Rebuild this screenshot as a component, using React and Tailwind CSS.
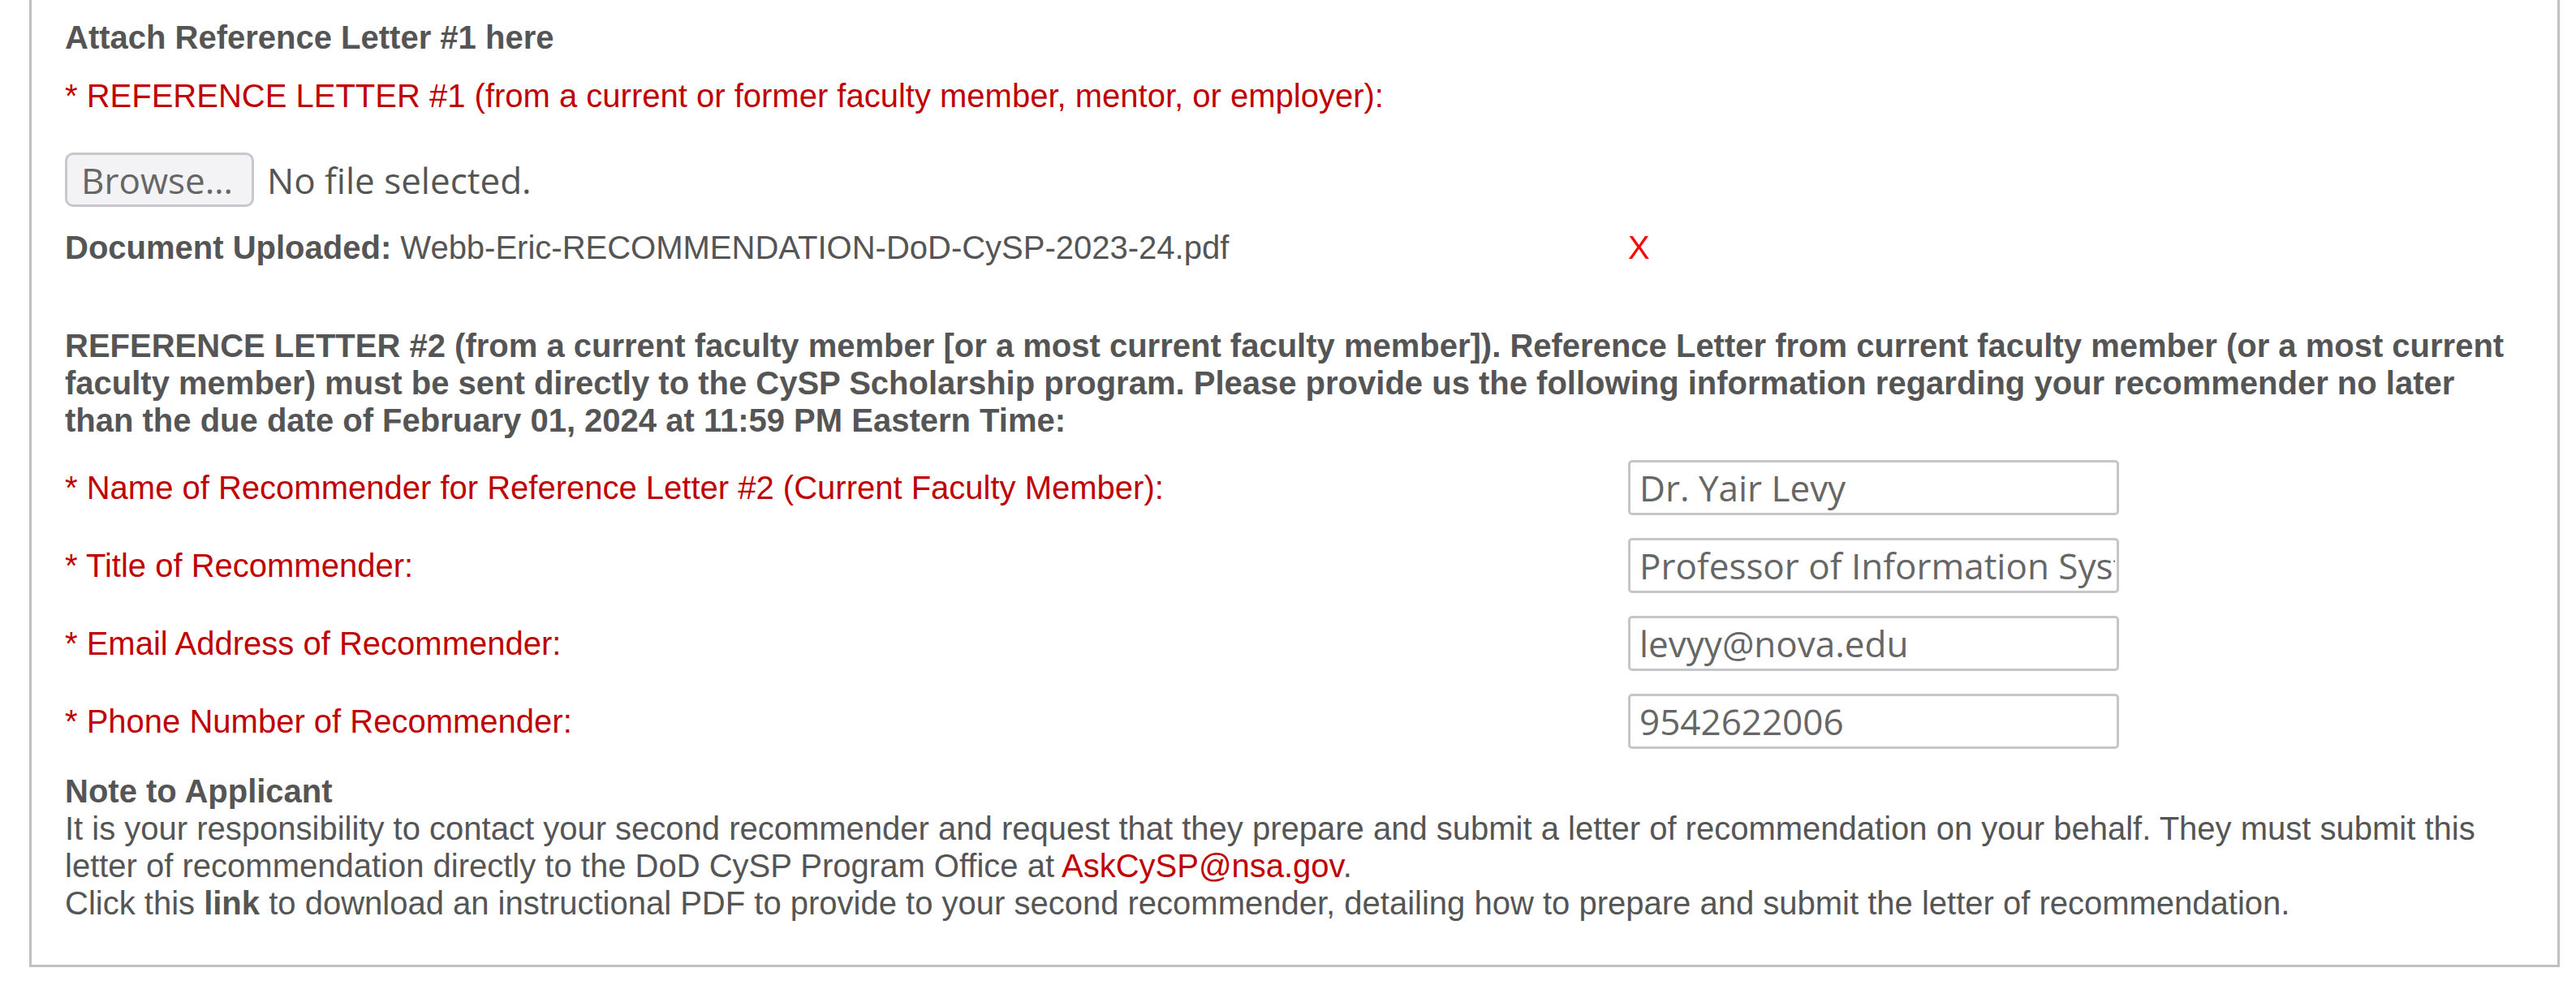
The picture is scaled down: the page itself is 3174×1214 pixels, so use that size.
import React from 'react';

// Recommender fields shown in the right-hand column
const recommender = [
  { id: 'name', label: 'Name of Recommender for Reference Letter #2 (Current Faculty Member):', value: 'Dr. Yair Levy' },
  { id: 'title', label: 'Title of Recommender:', value: 'Professor of Information Systems and Cybersecurity' },
  { id: 'email', label: 'Email Address of Recommender:', value: 'levyy@nova.edu' },
  { id: 'phone', label: 'Phone Number of Recommender:', value: '9542622006' },
];

const sans = "font-['Liberation_Sans',Arial,sans-serif]";
const uiFont = "font-['Open_Sans','Noto_Sans',sans-serif]";

function FieldRow({ id, label, value }) {
  return (
    <div className="grid grid-cols-[1926px_1fr] items-center h-[68px]">
      <label htmlFor={id} className="text-[#c00000]">
        * {label}
      </label>
      <input
        id={id}
        type="text"
        readOnly
        value={value}
        className={`w-[605px] h-[68px] border-[3px] border-[#c6c6ca] rounded-[5px] bg-white pl-[11px] pr-[2px] text-[44px] text-[#666666] outline-none ${uiFont}`}
      />
    </div>
  );
}

export default function App() {
  return (
    <div className={`min-h-[1214px] bg-white ${sans} text-[40px] leading-[46px] text-[#555555]`}>
      <div className="ml-[36px] mr-[20px] border-l-[3px] border-r-[3px] border-b-[3px] border-[#c0c0c0] pl-[41px] pr-[40px] pt-[23px] pb-[53px]">
        <h3 className="font-bold">Attach Reference Letter #1 here</h3>

        <p className="mt-[26px] text-[#c00000]">
          * REFERENCE LETTER #1 (from a current or former faculty member, mentor, or employer):
        </p>

        <div className="mt-[47px] flex items-center">
          <button
            type="button"
            className={`w-[233px] h-[67px] border-[3px] border-[#c8c8cc] bg-[#f3f3f5] rounded-[10px] pl-[17px] text-left text-[44px] leading-[58px] text-[#666666] ${uiFont}`}
          >
            Browse…
          </button>
          <span className={`ml-[16px] text-[44px] leading-[58px] text-[#555555] ${uiFont}`}>No file selected.</span>
        </div>

        <div className="mt-[27px] grid grid-cols-[1926px_1fr]">
          <div>
            <span className="font-bold">Document Uploaded:</span> Webb-Eric-RECOMMENDATION-DoD-CySP-2023-24.pdf
          </div>
          <a href="#" className="text-[#ff0000]">X</a>
        </div>

        <p className="mt-[75px] font-bold">
          REFERENCE LETTER #2 (from a current faculty member [or a most current faculty member]). Reference Letter from current faculty member (or a most current
          <br />
          faculty member) must be sent directly to the CySP Scholarship program. Please provide us the following information regarding your recommender no later
          <br />
          than the due date of February 01, 2024 at 11:59 PM Eastern Time:
        </p>

        <div className="mt-[26px] flex flex-col gap-[28px]">
          {recommender.map((r) => (
            <FieldRow key={r.id} {...r} />
          ))}
        </div>

        <div className="mt-[29px]">
          <div className="font-bold">Note to Applicant</div>
          <p>
            It is your responsibility to contact your second recommender and request that they prepare and submit a letter of recommendation on your behalf. They must submit this
            <br />
            letter of recommendation directly to the DoD CySP Program Office at{' '}
            <a href="#" className="text-[#c00000]">AskCySP@nsa.gov</a>.
            <br />
            Click this <a href="#" className="font-bold">link</a> to download an instructional PDF to provide to your second recommender, detailing how to prepare and submit the letter of recommendation.
          </p>
        </div>
      </div>
    </div>
  );
}
